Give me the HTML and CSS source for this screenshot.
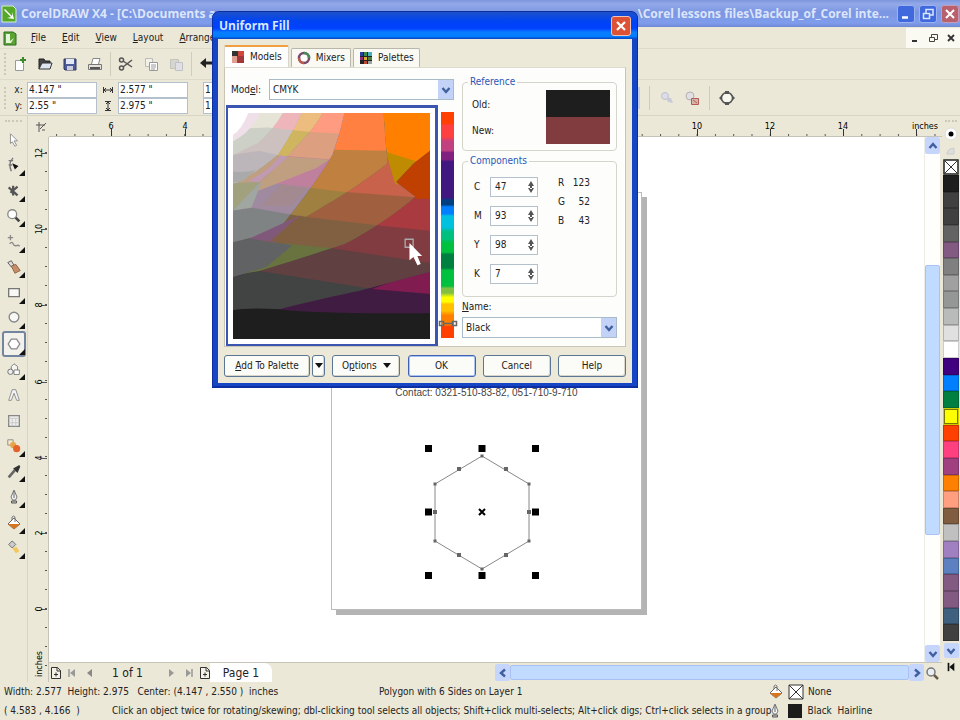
FILE: index.html
```
<!DOCTYPE html>
<html lang="en">
<head>
<meta charset="utf-8">
<title>CorelDRAW X4</title>
<link rel="stylesheet" href="styles.css">
</head>
<body>
<svg class="defs" aria-hidden="true">
  <symbol id="chev-down" viewBox="0 0 10 10"><path d="M1.5 3l3.5 4 3.5-4" fill="none" stroke="#3f5f9f" stroke-width="2.4"/></symbol>
  <symbol id="chev-up" viewBox="0 0 10 10"><path d="M1.5 7L5 3l3.500 4" fill="none" stroke="#3f5f9f" stroke-width="2.400"/></symbol>
  <symbol id="chev-left" viewBox="0 0 10 10"><path d="M7 1.500L3 5l4 3.500" fill="none" stroke="#3f5f9f" stroke-width="2.400"/></symbol>
  <symbol id="chev-right" viewBox="0 0 10 10"><path d="M3 1.500L7 5 3 8.500" fill="none" stroke="#3f5f9f" stroke-width="2.400"/></symbol>
  <symbol id="flyout" viewBox="0 0 6 6"><path d="M6 0v6H0z" fill="#111"/></symbol>
  <symbol id="page-add" viewBox="0 0 12 14"><path d="M1.500 1.500h6l3 3v8h-9z" fill="#f4f2e6" stroke="#333"/><path d="M7 1.500V5h3.500M4 8.500h4M6 6.500v4" fill="none" stroke="#333"/></symbol>
  <symbol id="bucket" viewBox="0 0 16 16"><path d="M2 9l6-6 6 6-6 5z" fill="#fff" stroke="#666"/><path d="M2 9h12l-6 5z" fill="#d8751c"/><path d="M6 5V2q1.500-2 3 0v5" fill="none" stroke="#777"/></symbol>
  <symbol id="pen" viewBox="0 0 16 16"><path d="M8 1L5 8l1.500 3h3L11 8z" fill="#f4f4f4" stroke="#777"/><path d="M8 2v7" stroke="#666"/><path d="M5.500 12h5v2h-5z" fill="#ccc" stroke="#555"/></symbol>
</svg>

<div class="app">
  <header class="titlebar">
    <svg class="logo" viewBox="0 0 16 18"><path d="M1 1h11l3 3v13H1z" fill="#56a829" stroke="#d6eec6"/><path d="M4 4l7 7V7l2 7-7-1 4-1-7-7z" fill="#fff"/></svg>
    <span class="title-start">CorelDRAW X4 - [C:\Documents a</span>
    <span class="title-end">\Corel lessons files\Backup_of_Corel inte...</span>
    <button class="win-btn" aria-label="Minimize"><svg viewBox="0 0 16 16"><path d="M4 11.500h6" stroke="#fff" stroke-width="2.500"/></svg></button>
    <button class="win-btn" aria-label="Restore"><svg viewBox="0 0 16 16"><path d="M6 7V3.500h7V9h-3M3.500 7.500h6v5h-6z" fill="none" stroke="#dbe6ff" stroke-width="1.500"/></svg></button>
    <button class="win-btn win-close" aria-label="Close"><svg viewBox="0 0 16 16"><path d="M4 4l8 8M12 4l-8 8" stroke="#fff" stroke-width="2"/></svg></button>
  </header>

  <nav class="menubar">
    <svg class="doc-icon" viewBox="0 0 14 16"><path d="M1 2h9l3 2v11H1z" fill="#5ba434" stroke="#2f6d24"/><path d="M3 4h4v7l4-3-3 5H3z" fill="#e4f5da"/></svg>
    <a href="#"><u>F</u>ile</a><a href="#"><u>E</u>dit</a><a href="#"><u>V</u>iew</a><a href="#"><u>L</u>ayout</a><a href="#"><u>A</u>rrange</a>
    <span class="mdi">
      <button aria-label="Minimize document"><svg viewBox="0 0 12 12"><path d="M3 9h5" stroke="#333" stroke-width="2"/></svg></button>
      <button aria-label="Restore document"><svg viewBox="0 0 12 12"><path d="M4.500 5V2.500h6v5H8M2.500 5.500h5v4h-5z" fill="none" stroke="#444"/></svg></button>
      <button aria-label="Close document"><svg viewBox="0 0 12 12"><path d="M3 3l6 6M9 3L3 9" stroke="#333" stroke-width="1.800"/></svg></button>
    </span>
  </nav>

  <div class="toolbar">
    <span class="grip"></span>
    <button aria-label="New"><svg viewBox="0 0 16 16"><path d="M3.500 4.500h6l2 3v7h-8z" fill="#fff" stroke="#999"/><path d="M11 1v6M8 4h6" stroke="#398a2c" stroke-width="2"/></svg></button>
    <button aria-label="Open"><svg viewBox="0 0 16 16"><path d="M2 13V3h5l1 2h5v3" fill="#444" stroke="#222"/><path d="M2 13l3-6h10l-2 6z" fill="#dfe6f2" stroke="#333"/></svg></button>
    <button aria-label="Save"><svg viewBox="0 0 16 16"><path d="M2 3h12v11H3l-1-1z" fill="#4d5c9a" stroke="#30375f"/><path d="M4 3h8v5H4z" fill="#e4e8f4"/><path d="M5 10h6v4H5z" fill="#ccd"/></svg></button>
    <button aria-label="Print"><svg viewBox="0 0 16 16"><path d="M4.500 8L6 2.500h7L11.500 8" fill="#fff" stroke="#888"/><path d="M1.500 8.500h13v5h-13z" fill="#e4e2d8" stroke="#777"/><path d="M3 12h10" stroke="#555" stroke-width="2"/></svg></button>
    <span class="sep"></span>
    <button aria-label="Cut"><svg viewBox="0 0 16 16"><path d="M5 5l9 6M5 11l9-7" stroke="#555" stroke-width="1.500"/><circle cx="3.500" cy="4" r="2" fill="none" stroke="#555" stroke-width="1.500"/><circle cx="3.500" cy="12" r="2" fill="none" stroke="#555" stroke-width="1.500"/></svg></button>
    <button aria-label="Copy"><svg viewBox="0 0 16 16"><path d="M2.500 2.500h7v8h-7z" fill="#f2f1e8" stroke="#bbb"/><path d="M6.500 6.500h8v8h-8z" fill="#fff" stroke="#999"/><path d="M8 9h5M8 11h5M8 13h4" stroke="#999"/></svg></button>
    <button aria-label="Paste"><svg viewBox="0 0 16 16"><path d="M2.500 3.500h8v9h-8z" fill="#d6d5d0" stroke="#c4c3be"/><path d="M7.500 6.500h7v8h-7z" fill="#e0e0e4" stroke="#c0c0c8"/></svg></button>
    <span class="sep"></span>
    <button aria-label="Undo"><svg viewBox="0 0 16 16"><path d="M1 7l6-5v3.500h8v3H7V12z" fill="#222"/></svg></button>
  </div>

  <div class="propbar">
    <span class="grip"></span>
    <div class="pair-labels"><label for="px">x:</label><label for="py">y:</label></div>
    <div class="pair"><input id="px" value='4.147 "'><input id="py" value='2.55 "'></div>
    <div class="pair-labels pair-icons">
      <svg viewBox="0 0 12 12"><path d="M1.500 3v6M10.500 3v6M2 6h8M4 4L2 6l2 2M8 4l2 2-2 2" fill="none" stroke="#333"/></svg>
      <svg viewBox="0 0 12 12"><path d="M3 1.500h6M3 10.500h6M6 2v8M4 4l2-2 2 2M4 8l2 2 2-2" fill="none" stroke="#333"/></svg>
    </div>
    <div class="pair"><input aria-label="Width" value='2.577 "'><input aria-label="Height" value='2.975 "'></div>
    <div class="pair pair-small"><input aria-label="Scale x" value="1"><input aria-label="Scale y" value="1"></div>
    <div class="prop-tools">
      <span class="active-edge"></span><span class="sep"></span>
      <button aria-label="To front"><svg viewBox="0 0 16 16"><circle cx="6" cy="6" r="3.500" fill="#dcdce6" stroke="#c0c0d0"/><path d="M7 8h5l2 5-5-1z" fill="#c9c9d8"/></svg></button>
      <button aria-label="To back"><svg viewBox="0 0 16 16"><circle cx="6" cy="6" r="4" fill="#e2dfe2" stroke="#b5aeb5"/><path d="M7.500 8.500h7v6h-7z" fill="#d9b4aa" stroke="#b05c54"/><path d="M9 10l4 3" stroke="#b05c54"/></svg></button>
      <span class="sep"></span>
      <button aria-label="Convert to curves"><svg viewBox="0 0 16 16"><circle cx="8" cy="8" r="5.500" fill="#f8f7ee" stroke="#555" stroke-width="1.500"/><path d="M6 1h4v3H6zM6 12h4v3H6zM0 8l3-3v6zM16 8l-3-3v6z" fill="#555"/></svg></button>
    </div>
  </div>

  <main class="workspace">
    <aside class="toolbox">
      <span class="hgrip"></span>
      <div class="tools">
        <button aria-label="Pick"><svg viewBox="0 0 18 18"><path d="M5 2l8 8H9l3 5-2 1-3-5-2 2z" fill="#fff" stroke="#888"/></svg></button>
        <button aria-label="Shape"><svg viewBox="0 0 18 18"><path d="M8 1Q2 7 6 16M3 4h5M3 9h4" fill="none" stroke="#777" stroke-width="1.500"/><path d="M7 7l7 3-4 4z" fill="#111"/></svg><svg class="fly"><use href="#flyout"/></svg></button>
        <button aria-label="Crop"><svg viewBox="0 0 18 18"><path d="M3 5l10 9M5 11l8-7M8 3v11" stroke="#555" stroke-width="2.500"/></svg><svg class="fly"><use href="#flyout"/></svg></button>
        <button aria-label="Zoom"><svg viewBox="0 0 18 18"><path d="M10 10l5 5" stroke="#444" stroke-width="3"/><circle cx="7" cy="7" r="5" fill="#fff" stroke="#888" stroke-width="1.500"/></svg><svg class="fly"><use href="#flyout"/></svg></button>
        <button aria-label="Freehand"><svg viewBox="0 0 18 18"><path d="M5 1v6M2 4h6M4 11q3-3 4 0t4 2 3 1" fill="none" stroke="#888" stroke-width="1.500"/></svg><svg class="fly"><use href="#flyout"/></svg></button>
        <button aria-label="Smart fill"><svg viewBox="0 0 18 18"><path d="M2 4l4-2 3 5-3 2z" fill="#ddd" stroke="#555"/><path d="M6 8l5-2 5 7-6 3z" fill="#c78d68" stroke="#8a6040"/></svg><svg class="fly"><use href="#flyout"/></svg></button>
        <button aria-label="Rectangle"><svg viewBox="0 0 18 18"><path d="M3 4h12v9H3z" fill="#f8f8f4" stroke="#777" stroke-width="1.500"/></svg><svg class="fly"><use href="#flyout"/></svg></button>
        <button aria-label="Ellipse"><svg viewBox="0 0 18 18"><circle cx="9" cy="8" r="5.500" fill="#f8f8f4" stroke="#888" stroke-width="1.500"/></svg><svg class="fly"><use href="#flyout"/></svg></button>
        <button class="on" aria-label="Polygon"><svg viewBox="0 0 18 18"><path d="M6 3.500h6l3.500 5.500-3.500 5.500H6L2.500 9z" fill="#fff" stroke="#8c8890" stroke-width="1.500"/></svg><svg class="fly"><use href="#flyout"/></svg></button>
        <button aria-label="Basic shapes"><svg viewBox="0 0 18 18"><path d="M9 2l4 3v6H6V5z" fill="#f4f4f0" stroke="#777"/><circle cx="5" cy="11" r="3" fill="#eee" stroke="#666"/><path d="M9 9h6v5H9z" fill="#fff" stroke="#777"/></svg><svg class="fly"><use href="#flyout"/></svg></button>
        <button aria-label="Text"><svg viewBox="0 0 18 18"><path d="M3 15L7 3h4l4 12h-3L9 7l-3 8z" fill="#f4f4f8" stroke="#888"/></svg></button>
        <button aria-label="Table"><svg viewBox="0 0 18 18"><path d="M3 3h12v12H3z" fill="#eeeeec" stroke="#888" stroke-width="1.500"/><path d="M3 6h12M7 6v9M11 6v9M3 11h12" stroke="#c8c8c8"/></svg></button>
        <button aria-label="Blend"><svg viewBox="0 0 18 18"><path d="M2 2h6v6H2z" fill="#f2e9c8" stroke="#888"/><circle cx="8" cy="8" r="3.500" fill="#e8a44c"/><circle cx="12" cy="12" r="4" fill="#e4632a"/></svg><svg class="fly"><use href="#flyout"/></svg></button>
        <button aria-label="Eyedropper"><svg viewBox="0 0 18 18"><path d="M3 15l7-8" stroke="#666" stroke-width="3"/><path d="M8 5l5 5 3-7-1-2z" fill="#333"/></svg><svg class="fly"><use href="#flyout"/></svg></button>
        <button aria-label="Outline"><svg viewBox="0 0 16 16"><use href="#pen"/></svg><svg class="fly"><use href="#flyout"/></svg></button>
        <button aria-label="Fill"><svg viewBox="0 0 16 16"><use href="#bucket"/></svg><svg class="fly"><use href="#flyout"/></svg></button>
        <button aria-label="Interactive fill"><svg viewBox="0 0 18 18"><path d="M3 5l4-4 4 4-4 4z" fill="#ccc" stroke="#666"/><path d="M7 9l5-1 3 5-4 2z" fill="#f2c85c"/></svg><svg class="fly"><use href="#flyout"/></svg></button>
      </div>
    </aside>

    <section class="stage">
      <div class="corner"><svg viewBox="0 0 12 12"><path d="M1 4h9M4 1v10M5 8l6-6M7 9h3" fill="none" stroke="#555"/></svg></div>
      <svg class="hruler" aria-hidden="true">
        <defs><pattern id="ht" x="62" width="18.300" height="21" patternUnits="userSpaceOnUse"><path d="M.5 18v2" stroke="#555"/></pattern></defs>
        <rect width="100%" height="21" fill="url(#ht)"/>
        <path d="M62.500 13v7M136.500 13v7M648.500 13v7M721.500 13v7M794.500 13v7M867.500 13v7" stroke="#333"/>
        <text x="62" y="13">6</text><text x="136" y="13">4</text><text x="648" y="13">10</text><text x="721" y="13">12</text><text x="794" y="13">14</text><text x="876" y="13">inches</text>
      </svg>
      <svg class="vruler" aria-hidden="true">
        <defs><pattern id="vt" y="15" width="21" height="19" patternUnits="userSpaceOnUse"><path d="M17 .5h2" stroke="#555"/></pattern></defs>
        <rect width="21" height="100%" fill="url(#vt)"/>
        <path d="M13 16.500h6M13 92.500h6M13 168.500h6M13 245.500h6M13 321.500h6M13 396.500h6M13 472.500h6M13 548.500h6" stroke="#555"/>
        <g><text transform="translate(14 16) rotate(-90)">12</text><text transform="translate(14 92) rotate(-90)">10</text><text transform="translate(14 168) rotate(-90)">8</text><text transform="translate(14 245) rotate(-90)">6</text><text transform="translate(14 321) rotate(-90)">4</text><text transform="translate(14 396) rotate(-90)">2</text><text transform="translate(14 472) rotate(-90)">0</text><text transform="translate(14 527) rotate(-90)">inches</text></g>
      </svg>
      <div class="canvas">
        <div class="page">
          <p>Contact: 0321-510-83-82, 051-710-9-710</p>
          <svg viewBox="331 192 311 418">
            <path d="M482 456l47 28v57l-47 28-47-28v-57z" fill="none" stroke="#888"/>
            <path d="M480.500 454.500h3v3h-3zM527.500 482.500h3v3h-3zM527.500 539.500h3v3h-3zM480.500 567.500h3v3h-3zM433.500 539.500h3v3h-3zM433.500 482.500h3v3h-3zM457 467h4v4h-4zM504 467h4v4h-4zM527 510h4v4h-4zM504 553h4v4h-4zM457 553h4v4h-4zM433 510h4v4h-4z" fill="#666"/>
            <path d="M425 445h7v7h-7zM478.500 445h7v7h-7zM532 445h7v7h-7zM425 508.500h7v7h-7zM532 508.500h7v7h-7zM425 572h7v7h-7zM478.500 572h7v7h-7zM532 572h7v7h-7z"/>
            <path d="M479 509l6 6M485 509l-6 6" stroke="#000" stroke-width="2"/>
          </svg>
        </div>
      </div>
      <div class="vscroll">
        <button aria-label="Scroll up"><svg><use href="#chev-up"/></svg></button>
        <span class="track-before"></span><span class="thumb"></span><span class="track-after"></span>
        <button aria-label="Scroll down"><svg><use href="#chev-down"/></svg></button>
      </div>
      <div class="pagenav">
        <button aria-label="Add page before"><svg viewBox="0 0 12 14"><use href="#page-add"/></svg></button>
        <button aria-label="First page"><svg viewBox="0 0 10 10"><path d="M2 1v8" stroke="#999" stroke-width="1.500"/><path d="M8 1v8L3 5z" fill="#999"/></svg></button>
        <button aria-label="Previous page"><svg viewBox="0 0 10 10"><path d="M7 1v8L2 5z" fill="#888"/></svg></button>
        <span class="count">1 of 1</span>
        <button aria-label="Next page"><svg viewBox="0 0 10 10"><path d="M3 1v8l5-4z" fill="#999"/></svg></button>
        <button aria-label="Last page"><svg viewBox="0 0 10 10"><path d="M8 1v8" stroke="#999" stroke-width="1.500"/><path d="M2 1v8l5-4z" fill="#999"/></svg></button>
        <button aria-label="Add page after"><svg viewBox="0 0 12 14"><use href="#page-add"/></svg></button>
        <button class="page-tab">Page 1</button>
        <div class="hscroll">
          <button aria-label="Scroll left"><svg><use href="#chev-left"/></svg></button>
          <span class="hthumb"></span>
          <button aria-label="Scroll right"><svg><use href="#chev-right"/></svg></button>
        </div>
        <button class="nav-zoom" aria-label="Navigator"><svg viewBox="0 0 14 14"><path d="M8 8l5 5" stroke="#6a5a4a" stroke-width="2.500"/><circle cx="6" cy="6" r="4" fill="#e8eef4" stroke="#777" stroke-width="1.500"/></svg></button>
      </div>
    </section>

    <aside class="palette">
      <span class="hgrip"></span>
      <button class="pal-menu" aria-label="Palette menu"><svg viewBox="0 0 14 14"><circle cx="7" cy="7" r="6" fill="#fff" stroke="#ddd"/><circle cx="7" cy="7" r="2.500"/></svg></button>
      <button class="pal-up" aria-label="Palette up"><svg viewBox="0 0 14 14"><path d="M3 10q0-5 7-6v6z" fill="#ddd" stroke="#ccc"/></svg></button>
      <button class="no-color" aria-label="No color"><svg viewBox="0 0 16 16"><path d="M1 1h14v14H1z" fill="#fff" stroke="#222" stroke-width="1.500"/><path d="M1 1l14 14M15 1L1 15" stroke="#333"/></svg></button>
      <div class="swatches">
        <i class="k1"></i><i class="k2"></i><i class="k2"></i><i class="k3"></i><i class="plum"></i><i class="k4"></i><i class="k5"></i><i class="k6"></i><i class="k7"></i><i class="k8"></i><i class="white"></i><i class="indigo"></i><i class="azure"></i><i class="green"></i><i class="yellow"></i><i class="red"></i><i class="pink"></i><i class="magenta"></i><i class="orange"></i><i class="peach"></i><i class="brown"></i><i class="silver"></i><i class="lilac"></i><i class="blue"></i><i class="plum"></i><i class="plum"></i><i class="steel"></i><i class="k2"></i>
      </div>
      <button class="pal-down" aria-label="Palette down"><svg><use href="#chev-down"/></svg></button>
      <button class="pal-expand" aria-label="Expand palette"><svg viewBox="0 0 12 12"><path d="M3 1v10" stroke="#111" stroke-width="2"/><path d="M10 1v10L4 6z" fill="#111"/></svg></button>
    </aside>
  </main>

  <footer class="status">
    <div class="status-row">
      <span class="dims">Width: 2.577&nbsp; Height: 2.975&nbsp;&nbsp; Center: (4.147 , 2.550 )&nbsp; inches</span>
      <span>Polygon with 6 Sides on Layer 1</span>
      <span class="ink"><svg viewBox="0 0 16 16"><use href="#bucket"/></svg><svg viewBox="0 0 16 16"><path d="M1 1h14v14H1z" fill="#fff" stroke="#333"/><path d="M1 1l14 14M15 1L1 15" stroke="#333"/></svg>None</span>
    </div>
    <div class="status-row">
      <span class="cursor">( 4.583 , 4.166&nbsp; )</span>
      <span>Click an object twice for rotating/skewing; dbl-clicking tool selects all objects; Shift+click multi-selects; Alt+click digs; Ctrl+click selects in a group</span>
      <span class="ink"><svg viewBox="0 0 16 16"><use href="#pen"/></svg><svg viewBox="0 0 16 16"><path d="M1 1h14v14H1z" fill="#1c1c1c"/></svg>Black&nbsp; Hairline</span>
    </div>
  </footer>

  <div class="dialog" role="dialog" aria-labelledby="dlg-title">
    <div class="dlg-title"><span id="dlg-title">Uniform Fill</span>
      <button class="dlg-close" aria-label="Close dialog"><svg viewBox="0 0 16 16"><path d="M4 4l8 8M12 4l-8 8" stroke="#fff" stroke-width="2.200"/></svg></button>
    </div>
    <div class="dlg-body">
      <div class="tabs" role="tablist">
        <button class="tab tab-on" role="tab"><svg viewBox="0 0 14 14"><path d="M1 1h12v12H1z" fill="#a3383a"/><path d="M1 1h6v5H1z" fill="#333"/><path d="M7 1h6v5H7z" fill="#d0483c"/><path d="M1 6h5v7H1z" fill="#e0a090"/></svg>Models</button>
        <button class="tab" role="tab"><svg viewBox="0 0 14 14"><circle cx="7" cy="7" r="5" fill="#fff" stroke="#7a4a6a" stroke-width="2.500"/><path d="M7 2a5 5 0 0 1 5 5" fill="none" stroke="#4c8a5a" stroke-width="2.500"/><path d="M2 7a5 5 0 0 0 5 5" fill="none" stroke="#c05a4a" stroke-width="2.500"/></svg>Mixers</button>
        <button class="tab" role="tab"><svg viewBox="0 0 14 14"><path d="M1 1h12v12H1z" fill="#222"/><path d="M1 1h3v4H1z" fill="#28409c"/><path d="M5 1h3v4H5z" fill="#3a8c4c"/><path d="M9 1h4v4H9z" fill="#4ab0c0"/><path d="M1 6h3v3H1z" fill="#8c2c7c"/><path d="M5 6h3v3H5z" fill="#d8b030"/><path d="M9 6h4v3H9z" fill="#508040"/><path d="M5 10h3v3H5z" fill="#c04830"/><path d="M9 10h4v3H9z" fill="#98a8a0"/></svg>Palettes</button>
      </div>
      <div class="panel">
        <div class="col-left">
          <div class="model-row"><label for="model">Mod<u>e</u>l:</label>
            <span class="combo"><select id="model"><option>CMYK</option></select><span class="arrow"><svg><use href="#chev-down"/></svg></span></span>
          </div>
          <div class="picker">
            <div class="gamut">
              <svg viewBox="40 40 595 675" preserveAspectRatio="none">
                <defs>
                  <path id="r1" d="M40 0H640V110L400 104 270 96 145 83 40 88z"/>
                  <path id="r2" d="M40 0H640V195L345 180 180 167 119 153 40 165z"/>
                  <path id="r3" d="M40 0H640V298L590 292 370 275 190 253 110 246 40 250z"/>
                  <path id="r4" d="M40 0H640V392L500 378 240 348 100 323 40 331z"/>
                  <path id="r5" d="M40 0H640V489L340 444 150 425 90 413 40 426z"/>
                  <path id="r6" d="M40 0H640V581L460 566 120 512 40 525z"/>
                  <clipPath id="c7"><path d="M0 0H640V513Q480 555 420 572 330 590 180 626L0 640z"/></clipPath>
                  <clipPath id="c6"><path d="M0 0H640V148L585 190 532 246 590 290Q510 360 380 430 260 470 120 512L0 560z"/></clipPath>
                  <clipPath id="c5"><path d="M0 0H492L500 120 507 190Q400 270 320 315 200 390 100 430L0 460z"/></clipPath>
                  <clipPath id="c45"><path d="M0 0H384L376 40Q362 110 335 165 295 260 240 352 190 430 130 480L0 530z"/></clipPath>
                  <clipPath id="c4"><path d="M0 0H384L376 40Q362 105 340 165 290 250 180 385 130 405 90 415L0 440z"/></clipPath>
                  <clipPath id="c3"><path d="M0 0H330L310 40Q290 80 240 130 190 185 120 248 85 290 40 331H0z"/></clipPath>
                  <clipPath id="c2"><path d="M0 0H260L246 40Q225 90 175 165 110 220 40 254H0z"/></clipPath>
                  <clipPath id="c1"><path d="M0 0H210L190 40Q165 85 115 130 70 150 40 166H0z"/></clipPath>
                </defs>
                <path d="M40 40h595v675H40z" fill="#401c42"/>
                <path d="M640 500v81l-180-15z" fill="#801c50"/>
                <g clip-path="url(#c7)"><path d="M0 0h640v715H0z" fill="#424343"/><use href="#r6" fill="#604040"/><use href="#r5" fill="#803c40"/><use href="#r4" fill="#a83a40"/><path d="M640 0v296H590L520 240V0z" fill="#bf4000"/></g>
                <g clip-path="url(#c6)"><path d="M0 0h640v715H0z" fill="#424343"/><use href="#r6" fill="#697340"/><path d="M40 412l50 1 130 22-80 65-100 30z" fill="#616263"/><use href="#r5" fill="#806040"/><use href="#r4" fill="#a06040"/><use href="#r3" fill="#c8624a"/><path d="M500 150L640 183v70H530z" fill="#bf8b00"/><path d="M490 0h150v183H590L490 152z" fill="#ff8000"/></g>
                <g clip-path="url(#c5)"><path d="M0 0h640v715H0z" fill="#616263"/><use href="#r5" fill="#806040"/><use href="#r4" fill="#9f8040"/><use href="#r3" fill="#bf8040"/><path d="M0 0h640v155l-295-5z" fill="#ff8040"/></g>
                <g clip-path="url(#c4)"><path d="M0 0h640v715H0z" fill="#616263"/><use href="#r5" fill="#808384"/><use href="#r4" fill="#a08aa0"/><path d="M186 252l80 11-50 55-90 0z" fill="#a28a90"/><use href="#r3" fill="#bf809e"/><path d="M40 300V170l130-2 160 12-40 25-150 58z" fill="#bf9f80"/><use href="#r2" fill="#dca080"/><use href="#r1" fill="#ff9b80"/></g>
                <path d="M90 415l155-70-80 82z" fill="#80587a"/>
                <path d="M240 348l16 2-60 65-46 10z" fill="#806040"/>
                <g clip-path="url(#c3)"><path d="M0 0h640v715H0z" fill="#808384"/><use href="#r4" fill="#a1a17e"/><use href="#r3" fill="#bf9f80"/><use href="#r2" fill="#cfb560"/><use href="#r1" fill="#edbd80"/></g>
                <path d="M40 331l80-83 6 0-30 74z" fill="#a0a6a0"/>
                <g clip-path="url(#c2)"><path d="M0 0h640v715H0z" fill="#a0a6a0"/><use href="#r3" fill="#bcb6ba"/><use href="#r2" fill="#ccc1bf"/><use href="#r1" fill="#eeb6bb"/></g>
                <path d="M82 244q70-32 100-77l25 4q-45 40-90 76z" fill="#bf9ab0"/>
                <path d="M40 215q40 5 70-6l-40 34-30 5z" fill="#a9aaa9"/>
                <g clip-path="url(#c1)"><path d="M0 0h640v715H0z" fill="#ccd0c6"/><use href="#r1" fill="#e6e4d6"/><path d="M80 0h60Q110 90 40 125V80z" fill="#eedfe8"/><path d="M0 0h100Q75 85 40 105H0z" fill="#fff"/></g>
                <path d="M40 629q40-8 140-3 100 14 455 12v80H40z" fill="#1e1e1e"/>
                <path d="M560 417h24v24h-24z" fill="none" stroke="#aaa" stroke-width="4"/>
                <path d="M573 428v52l12-10 12 25 10-4-10-24h14z" fill="#fff"/>
              </svg>
            </div>
            <div class="hue"><svg viewBox="0 0 20 8"><path d="M1.500 1.500h4v4h-4zM14.500 1.500h4v4h-4zM6 3.500h8" fill="none" stroke="#666" stroke-width="1.500"/></svg></div>
          </div>
        </div>
        <div class="col-right">
          <fieldset class="reference"><legend>Reference</legend>
            <div class="ref-labels"><span>Old:</span><span>New:</span></div>
            <div class="ref-colors"><i class="old"></i><i class="new"></i></div>
          </fieldset>
          <fieldset class="components"><legend>Components</legend>
            <div class="cmyk">
              <label for="c">C</label><span class="spin"><input id="c" value="47"><svg viewBox="0 0 6 12"><path d="M3 0l3 5H0zM3 12l3-5H0zM2 4h2v4H2z" fill="#555"/></svg></span>
              <label for="m">M</label><span class="spin"><input id="m" value="93"><svg viewBox="0 0 6 12"><path d="M3 0l3 5H0zM3 12l3-5H0zM2 4h2v4H2z" fill="#555"/></svg></span>
              <label for="y">Y</label><span class="spin"><input id="y" value="98"><svg viewBox="0 0 6 12"><path d="M3 0l3 5H0zM3 12l3-5H0zM2 4h2v4H2z" fill="#555"/></svg></span>
              <label for="k">K</label><span class="spin"><input id="k" value="7"><svg viewBox="0 0 6 12"><path d="M3 0l3 5H0zM3 12l3-5H0zM2 4h2v4H2z" fill="#555"/></svg></span>
            </div>
            <div class="rgb"><span>R</span><b>123</b><span>G</span><b>52</b><span>B</span><b>43</b></div>
          </fieldset>
          <label class="name-label" for="name"><u>N</u>ame:</label>
          <span class="combo"><select id="name"><option>Black</option></select><span class="arrow"><svg><use href="#chev-down"/></svg></span></span>
        </div>
      </div>
      <div class="buttons">
        <span class="split"><button class="btn"><span><u>A</u>dd To Palette</span></button><button class="btn btn-drop" aria-label="Palette list"><svg viewBox="0 0 8 6"><path d="M0 0h8L4 5z" fill="#111"/></svg></button></span>
        <button class="btn"><span>O<u>p</u>tions</span><svg viewBox="0 0 8 6"><path d="M0 0h8L4 5z" fill="#111"/></svg></button>
        <button class="btn btn-default">OK</button>
        <button class="btn">Cancel</button>
        <button class="btn">Help</button>
      </div>
    </div>
  </div>
</div>
</body>
</html>
```
FILE: styles.css
```
* { box-sizing: border-box; }
body {
  margin: 0;
  background: #ebe8d7;
  color: #222;
  font: 10px/12px "DejaVu Sans Condensed", "DejaVu Sans", sans-serif;
}
button, input, select { font: inherit; color: inherit; margin: 0; padding: 0; border: 0; background: none; }
button { display: inline-flex; align-items: center; justify-content: center; }
a { color: inherit; text-decoration: none; }
svg { display: block; flex: none; width: 16px; height: 16px; }
.defs { position: absolute; width: 0; height: 0; }
.app { position: relative; display: flex; flex-direction: column; min-height: 100vh; }

/* Title bar */
.titlebar {
  display: flex; align-items: center; height: 27px; padding: 0 1px 0 1px; gap: 4px;
  background: linear-gradient(#7d96dc, #93a9e8 15%, #7b96e2 45%, #7f9dec 85%, #6f89d4);
  color: #dde5fb; font: bold 12px/16px "Open Sans", sans-serif; white-space: nowrap;
}
.logo { height: 18px; }
.title-end { margin-left: auto; margin-right: 4px; }
.win-btn { width: 18px; height: 18px; border: 1px solid #9db3f0; border-radius: 3px; background: #3f69dc; }
.win-close { background: #b8606c; border-color: #c99ab8; }

/* Menu and tool bars */
.menubar { display: flex; align-items: center; height: 22px; padding-left: 3px; gap: 16px; border-bottom: 1px solid #dedbc9; }
.menubar .doc-icon { width: 14px; margin-right: -2px; }
.mdi { display: flex; align-items: center; justify-content: space-around; width: 54px; height: 20px; margin-left: auto; background: #faf9f2; }
.mdi svg { width: 12px; height: 12px; }
.toolbar { display: flex; align-items: center; height: 31px; padding-left: 4px; gap: 9px; border-bottom: 1px solid #dedbc9; }
.grip { width: 2px; height: 22px; border-left: 2px dotted #cbc8b8; }
.toolbar .grip { margin-right: -3px; }
.toolbar .sep { margin: 0 -2px; }
.sep { width: 1px; height: 24px; background: #cfccbc; }
.propbar { display: flex; align-items: center; height: 36px; padding-left: 4px; border-bottom: 1px solid #d8d5c4; }
.pair-labels { display: flex; flex-direction: column; gap: 4px; align-items: center; width: 21px; padding-left: 4px; }
.pair-icons { padding-left: 0; }
.pair-labels svg { width: 12px; height: 12px; }
.pair { display: flex; flex-direction: column; width: 70px; }
.pair input { width: 100%; height: 16px; padding-left: 1px; border: 1px solid #b4c0cc; background: #fff; }
.pair-small { width: 30px; margin-left: 15px; }
.prop-tools { display: flex; align-items: center; gap: 9px; margin-left: 403px; }
.active-edge { width: 4px; height: 22px; background: #c1cdf0; }

/* Workspace */
.workspace { display: flex; flex: 1; }
.toolbox { width: 28px; padding-top: 4px; border-right: 1px solid #d8d5c4; }
.hgrip { display: block; height: 2px; margin: 0 5px; border-top: 2px dotted #cbc8b8; }
.tools { display: flex; flex-direction: column; height: 434px; margin-top: 5px; }
.tools button { position: relative; flex: 1; width: 24px; margin-left: 2px; border: 2px solid transparent; border-radius: 3px; }
.tools button.on { border-color: #7484a0; background: #f3f2ea; }
.tools .fly { position: absolute; right: -1px; bottom: 0; width: 6px; height: 6px; }
.stage { display: grid; flex: 1; min-width: 0; grid-template: 21px 1fr 20px / 21px 1fr 18px; }
.corner { padding: 5px 0 0 7px; }
.corner svg { width: 12px; height: 12px; }
.hruler { grid-column: 2 / 4; width: 100%; height: 21px; font-size: 9px; text-anchor: middle; border-bottom: 1px solid #c6c4b8; }
.vruler { grid-row: 2 / 4; grid-column: 1; width: 21px; height: 100%; font-size: 9px; text-anchor: middle; border-right: 1px solid #c6c4b8; }
.canvas { position: relative; background: #fff; overflow: hidden; }
.page { position: absolute; left: 282px; top: 55px; width: 311px; height: 418px; border: 1px solid #bbb; background: #fff; box-shadow: 5px 5px 0 #b4b4b4; }
.page p { margin: 193px 0 0; text-align: center; font: 10px/14px "Liberation Sans", sans-serif; color: #444; }
.page svg { position: absolute; inset: -1px; width: 311px; height: 418px; }
.vscroll { display: flex; flex-direction: column; width: 16px; background: #fefefc; border-left: 1px solid #eeede5; }
.vscroll button, .hscroll button, .pal-down { width: 15px; height: 17px; border-radius: 2px; background: #c6d5fc; }
.vscroll svg, .hscroll svg, .pal-down svg, .arrow svg { width: 10px; height: 10px; }
.track-before { flex: 111; }
.thumb { flex: 269; border: 1px solid #a9c2f5; border-radius: 2px; background: #c1daff; }
.track-after { flex: 110; }
.pagenav { grid-column: 2 / 4; display: flex; align-items: center; border-top: 1px solid #c6c4b8; font-size: 12px; }
.pagenav > button svg { width: 10px; height: 10px; margin: 0 4px; }
.pagenav > button:first-child svg, .pagenav > button:nth-child(7) svg { width: 12px; height: 14px; margin: 0 1px; }
.count { margin: 0 19px 0 13px; }
.pagenav .page-tab { align-self: stretch; width: 62px; margin-left: -2px; background: #fff; border-radius: 0 8px 0 0; }
.hscroll { display: flex; flex: 1; align-items: center; margin-left: 223px; }
.hthumb { flex: 1; height: 15px; border: 1px solid #a9c2f5; border-radius: 2px; background: #c1daff; }
.pagenav .nav-zoom svg { width: 14px; height: 14px; margin: 0 3px 0 1px; }
.palette { display: flex; flex-direction: column; align-items: center; width: 18px; padding-top: 4px; }
.palette .hgrip { width: 12px; margin: 0; }
.pal-menu svg, .pal-up svg { width: 14px; height: 14px; }
.pal-menu { margin-top: 5px; }
.pal-up { margin-top: 3px; }
.no-color { margin-top: 1px; }
.swatches { display: flex; flex-direction: column; width: 16px; height: 466px; }
.swatches i { flex: 1; border: 1px solid #0003; }
.k1 { background: #1e1e1e; } .k2 { background: #404040; } .k3 { background: #636363; } .k4 { background: #808080; }
.k5 { background: #a0a0a0; } .k6 { background: #959696; } .k7 { background: #b9baba; } .k8 { background: #dfe0df; }
.plum { background: #825a82; } .white { background: #fff; } .indigo { background: #400080; } .azure { background: #0080ff; }
.green { background: #008040; } .yellow { background: #ff0; outline: 1px solid #777700; outline-offset: -2px; } .red { background: #ff4000; }
.pink { background: #ff4080; } .magenta { background: #a04080; } .orange { background: #ff8000; } .peach { background: #ff9f80; }
.brown { background: #805c40; } .silver { background: #c0c0c0; } .lilac { background: #a080c0; } .blue { background: #5c80c0; } .steel { background: #406080; }
.pal-down { margin-top: 2px; height: 15px; }
.pal-expand svg { width: 10px; height: 10px; margin-top: 4px; }

/* Status bar */
.status { display: flex; flex-direction: column; height: 38px; white-space: nowrap; }
.status-row { display: flex; align-items: center; height: 19px; padding-left: 4px; }
.dims { width: 375px; }
.cursor { width: 108px; }
.ink { display: flex; align-items: center; gap: 4px; width: 192px; margin-left: auto; }
.status-row:last-child .ink { margin-left: -4px; }

/* Fill dialog */
.dialog {
  position: absolute; left: 212px; top: 11px; width: 426px;
  border-radius: 7px 7px 0 0; background: #1646c4; border: 1px solid #0c2fa4; border-bottom-width: 2px;
}
.dlg-title {
  display: flex; align-items: center; justify-content: space-between; height: 27px; padding: 0 6px;
  border-radius: 6px 6px 0 0; background: linear-gradient(#1c50c8, #0044f4 35%, #0040ff 60%, #0a7cff 75%, #0080ff 90%, #0a40c0);
  color: #d8e6ff; font: bold 12px/16px "Open Sans", sans-serif;
}
.dlg-close { width: 20px; height: 20px; border: 1px solid #f2c4b8; border-radius: 3px; background: #dd5134; }
.dlg-body { margin: 0 5px 3px; padding: 6px 6px 6px; background: #ece9d8; }
.tabs { display: flex; align-items: flex-end; gap: 2px; height: 22px; }
.tab { gap: 5px; height: 19px; padding: 0 5px; border: 1px solid #b9b7aa; border-bottom: 0; border-radius: 2px 2px 0 0; background: #faf9f4; }
.tab svg { width: 14px; height: 14px; }
.tab-on { height: 22px; padding: 0 6px; border-color: #d8d6cc; border-top: 2px solid #f0a040; background: #fff; }
.panel { display: flex; gap: 8px; padding: 11px 8px 0 1px; border: 1px solid #c8c5b6; border-top-color: #dedcd0; background: #fdfdfc; }
.col-left { width: 228px; }
.model-row { display: flex; align-items: center; }
.model-row label { width: 43px; padding-left: 5px; }
.combo { position: relative; display: flex; flex: 1; height: 21px; }
.combo select { width: 100%; padding: 0 3px; appearance: none; border: 1px solid #a9bac9; background: #fff; }
.arrow { position: absolute; right: 1px; top: 1px; display: flex; align-items: center; justify-content: center; width: 15px; height: 19px; background: #c3d3f8; pointer-events: none; }
.picker { display: flex; gap: 3px; margin-top: 5px; }
.gamut { width: 212px; padding: 5px; border: 3px solid #3a56b0; border-left-width: 2px; border-bottom-width: 2px; background: #fff; }
.gamut svg { width: 100%; height: 226px; }
.hue {
  position: relative; width: 13px; height: 226px; margin-top: 7px;
  background: linear-gradient(#ff4000 5%, #ff4040 6% 11%, #c04080 13% 17%, #802080 18% 21%, #401880 22% 38%, #004080 39% 41%, #0080ff 42% 45%, #00c0e0 46% 51%, #00c080 53% 56%, #00c040 58% 62%, #008040 63% 69%, #00c040 70% 77%, #80c040 78% 80%, #ffff00 82% 84%, #ffc000 85% 88%, #ff8000 90% 94%, #ff4000 95%);
}
.hue svg { position: absolute; left: -3px; bottom: 10px; width: 20px; height: 8px; }
.col-right { display: flex; flex: 1; flex-direction: column; }
.col-right .combo { flex: none; }
fieldset { display: flex; justify-content: space-between; min-width: 0; margin: 0; padding: 0 6px 6px 9px; border: 1px solid #d5d4cb; border-radius: 4px; }
fieldset + fieldset { margin-top: 4px; }
legend { margin-left: -4px; padding: 0 2px; color: #2c56b4; }
.reference { height: 75px; margin-top: -3px; }
.ref-labels { display: flex; flex-direction: column; gap: 14px; padding-top: 11px; }
.ref-colors { display: flex; flex-direction: column; width: 64px; padding-top: 2px; }
.ref-colors i { height: 27px; }
.old { background: #1e1e1e; }
.new { background: #803c3e; }
.components { height: 142px; }
.cmyk { display: grid; grid-template-columns: 16px 48px; grid-auto-rows: 29px; align-items: center; padding-left: 2px; margin-top: 5px; }
.spin { position: relative; display: block; }
.spin input { width: 100%; height: 20px; padding-left: 4px; border: 1px solid #b4c0cc; background: #fff; }
.spin svg { position: absolute; right: 4px; top: 4px; width: 6px; height: 12px; }
.rgb { display: grid; grid-template-columns: 12px 20px; grid-auto-rows: 19px; align-content: start; justify-items: end; margin: 10px 20px 0 0; }
.rgb span { justify-self: start; }
.rgb b { font-weight: normal; }
.name-label { margin: 4px 0 4px; }
.buttons { display: flex; justify-content: space-between; margin-top: 8px; }
.split { display: flex; gap: 2px; }
.btn { width: 68px; height: 22px; gap: 6px; border: 1px solid #5b7694; border-radius: 3px; background: #fbfbf8; box-shadow: inset -1px -1px 0 #d8d5ca; }
.split .btn { width: 86px; }
.split .btn-drop { width: 13px; }
.btn svg { width: 8px; height: 6px; }
.btn-default { border-color: #3f62b4; box-shadow: inset 0 0 0 1px #a9c4f2; }
```
